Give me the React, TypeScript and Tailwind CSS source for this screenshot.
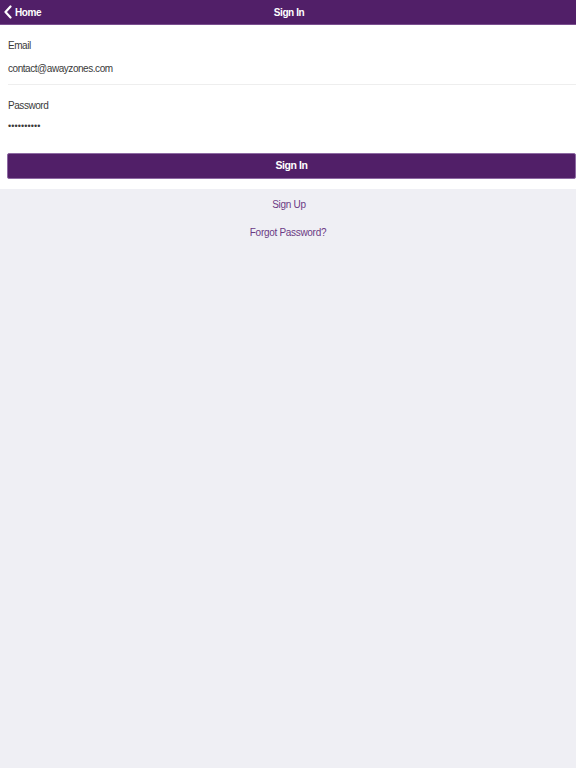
export default function App() {
  return (
    <div className="min-h-[768px] w-[576px] bg-[#efeff4]" style={{ fontFamily: '"Liberation Sans", Arial, sans-serif' }}>
      <div className="relative flex h-[25px] items-center border-b border-[#7a4f8f] bg-[#511f68] text-[10px] font-bold tracking-[-0.4px] text-white">
        <div className="flex items-center pl-[3px]">
          <svg width="10" height="14" viewBox="0 0 10 14" className="mr-[2px]">
            <path d="M7.5 1.5 L2.5 7 L7.5 12.5" fill="none" stroke="white" strokeWidth="2.2" strokeLinecap="round" strokeLinejoin="round" />
          </svg>
          <span>Home</span>
        </div>
        <div className="absolute inset-x-0 top-0 flex h-[24px] items-center justify-center pl-[2px]">Sign In</div>
      </div>
      <div className="bg-white pb-[10px] text-[10px] tracking-[-0.45px] text-[#3a3a3a]">
        <div className="ml-[8px] border-b border-[#eeeeee] pt-[10px] pb-[6px]">
          <div className="flex h-[20px] items-center">Email</div>
          <div className="mt-[3px] flex h-[20px] items-center">contact@awayzones.com</div>
        </div>
        <div className="ml-[8px] pt-[10px]">
          <div className="flex h-[20px] items-center">Password</div>
          <div className="mt-[2px] flex h-[20px] items-center text-[9px] tracking-[0.1px]">••••••••••</div>
        </div>
        <div className="mt-[16px] ml-[7px] flex h-[26px] items-center justify-center rounded-[2px] border border-[#8e6aa3] bg-[#511f68] text-[10.5px] font-bold tracking-[-0.4px] text-white">
          Sign In
        </div>
      </div>
      <div className="flex flex-col items-center text-[10px] tracking-[-0.3px] text-[#6b3a84]">
        <div className="mt-[8px] flex h-[14px] items-center pl-[2px]">Sign Up</div>
        <div className="mt-[14px] flex h-[14px] items-center">Forgot Password?</div>
      </div>
    </div>
  );
}
